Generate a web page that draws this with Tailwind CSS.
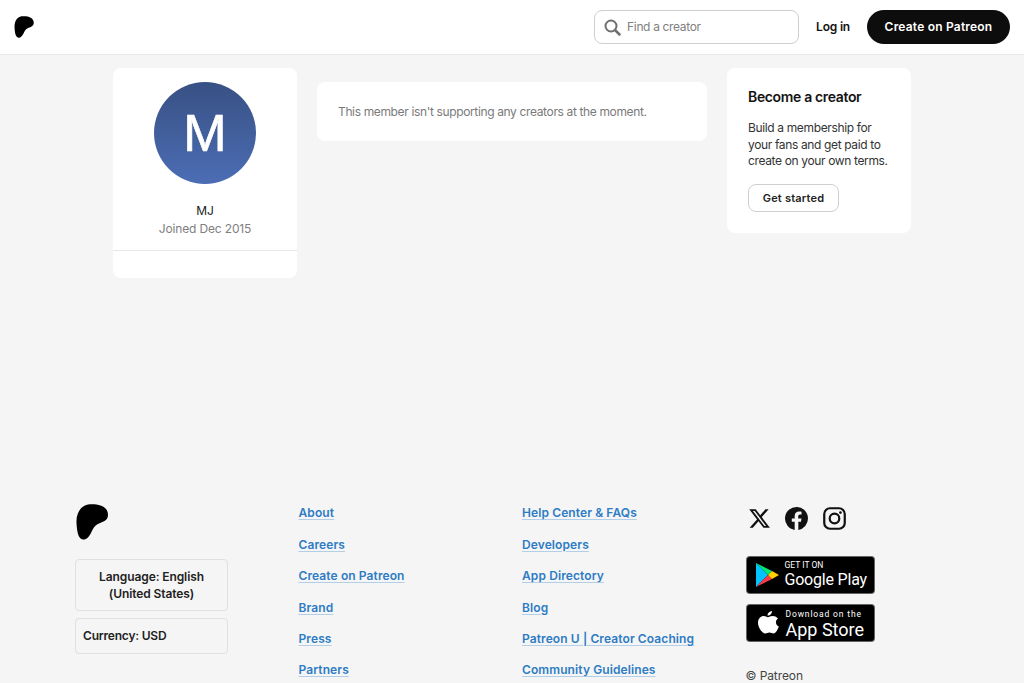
<!DOCTYPE html>
<html lang="en">
<head>
<meta charset="UTF-8">
<meta name="viewport" content="width=device-width, initial-scale=1.0">
<script src="https://cdn.jsdelivr.net/npm/@tailwindcss/browser@4"></script>
<title>MJ | Patreon</title>
</head>
<body class="bg-[#f5f5f5] font-['Inter','Liberation_Sans',sans-serif] h-[683px] overflow-hidden text-[#131313]">
    <!-- header -->
    <header class="h-[55px] bg-white border-b border-[#e8e8e8] flex items-center pl-[14px] pr-[14px]">
        <svg class="w-5 h-[22px]" viewBox="0 0 32 36"><path fill="#000" d="M.5 19C0 10 4 2 12 .5C20-.5 32 1 32 11C32 17 26 18 22 20C18 22 17 25 15 29C13 33 10 36 7 35.500C2 35 1 27 .5 19Z"/></svg>
        <div class="ml-auto w-[205px] h-[34px] border border-[#cfcfcf] rounded-lg flex items-center pl-[9px] mr-[17px]">
            <svg class="w-[17px] h-[17px]" viewBox="0 0 17 17" fill="none" stroke="#6f6f6f"><circle cx="7" cy="7" r="5.500" stroke-width="2"/><path d="M11 11l4.500 4.500" stroke-width="2.500" stroke-linecap="round"/></svg>
            <span class="ml-[6px] text-xs tracking-[-0.35px] text-[#808080]">Find a creator</span>
        </div>
        <a class="text-xs font-semibold tracking-[-0.2px] mr-[17px]">Log in</a>
        <a class="h-[34px] w-[143px] rounded-full bg-[#0d0d0d] text-white text-xs font-semibold tracking-[0.2px] flex items-center justify-center">Create on Patreon</a>
    </header>

    <!-- main -->
    <main class="h-[449px] pt-[13px] ml-[113px] w-[798px] grid grid-cols-[184px_390px_184px] gap-x-5 items-start">
        <section class="bg-white rounded-lg h-[210px] flex flex-col items-center pt-[14px]">
            <div class="w-[102px] h-[102px] rounded-full bg-gradient-to-b from-[#385184] to-[#4c6db5] flex items-center justify-center text-white text-[52px] [-webkit-text-stroke:0.7px_white] font-['Liberation_Sans',sans-serif]">M</div>
            <div class="mt-[18px] text-xs leading-[18px] text-[#222]">MJ</div>
            <div class="text-xs leading-[18px] text-[#808080] tracking-[-0.15px]">Joined Dec 2015</div>
            <div class="w-full border-t border-[#e8e8e8] mt-[12px]"></div>
        </section>
        <section class="bg-white rounded-lg mt-[14px] h-[59px] pl-[21px] flex items-center text-xs text-[#7a7a7a] tracking-[-0.36px]">
            This member isn't supporting any creators at the moment.
        </section>
        <section class="bg-white rounded-lg h-[165px] pl-[21px] pt-[19px]">
            <h2 class="text-sm leading-[20px] font-semibold tracking-[-0.35px]">Become a creator</h2>
            <p class="mt-[13px] text-xs leading-[16.700px] text-[#333] tracking-[-0.36px]">Build a membership for<br>your fans and get paid to<br>create on your own terms.</p>
            <a class="mt-[14px] w-[91px] h-[28px] bg-white border border-[#cfcfcf] rounded-lg flex items-center justify-center text-[11px] font-semibold tracking-[0.2px] text-[#222]">Get started</a>
        </section>
    </main>

    <!-- footer -->
    <footer class="ml-[75px] grid grid-cols-[223.500px_223.500px_223.500px_223.500px]">
        <div>
            <svg class="w-[32px] h-[36px] ml-[1px]" viewBox="0 0 32 36"><path fill="#000" d="M.5 19C0 10 4 2 12 .5C20-.5 32 1 32 11C32 17 26 18 22 20C18 22 17 25 15 29C13 33 10 36 7 35.500C2 35 1 27 .5 19Z"/></svg>
            <div class="mt-[19px] w-[153px] h-[52px] border border-[#e0e0e0] rounded flex items-center justify-center text-center text-xs leading-[17px] font-semibold tracking-[-0.1px] text-[#222]">Language: English<br>(United States)</div>
            <div class="mt-[7px] w-[153px] h-[36px] border border-[#e0e0e0] rounded flex items-center pl-[7px] text-xs font-semibold tracking-[-0.2px] text-[#222]">Currency: USD</div>
        </div>
        <ul class="pt-[0.300px] flex flex-col gap-y-[14px] text-xs leading-[17.400px] font-semibold tracking-[0.1px] text-[#2d7cc4]">
            <li><a class="underline decoration-[#b3cfe8] underline-offset-2">About</a></li>
            <li><a class="underline decoration-[#b3cfe8] underline-offset-2">Careers</a></li>
            <li><a class="underline decoration-[#b3cfe8] underline-offset-2">Create on Patreon</a></li>
            <li><a class="underline decoration-[#b3cfe8] underline-offset-2">Brand</a></li>
            <li><a class="underline decoration-[#b3cfe8] underline-offset-2">Press</a></li>
            <li><a class="underline decoration-[#b3cfe8] underline-offset-2">Partners</a></li>
        </ul>
        <ul class="pt-[0.300px] flex flex-col gap-y-[14px] text-xs leading-[17.400px] font-semibold tracking-[0.1px] text-[#2d7cc4]">
            <li><a class="underline decoration-[#b3cfe8] underline-offset-2">Help Center &amp; FAQs</a></li>
            <li><a class="underline decoration-[#b3cfe8] underline-offset-2">Developers</a></li>
            <li><a class="underline decoration-[#b3cfe8] underline-offset-2">App Directory</a></li>
            <li><a class="underline decoration-[#b3cfe8] underline-offset-2">Blog</a></li>
            <li><a class="underline decoration-[#b3cfe8] underline-offset-2">Patreon U | Creator Coaching</a></li>
            <li><a class="underline decoration-[#b3cfe8] underline-offset-2">Community Guidelines</a></li>
        </ul>
        <div>
            <div class="flex items-center gap-x-[14.500px] ml-[2px] h-[28px]">
                <svg class="w-[23px] h-[23px]" viewBox="0 0 24 24"><path fill="#111" d="M18.244 2.250h3.308l-7.227 8.260 8.502 11.240H16.170l-5.214-6.817L4.990 21.750H1.680l7.730-8.835L1.254 2.250H8.080l4.713 6.231zm-1.161 17.520h1.833L7.084 4.126H5.117z"/></svg>
                <svg class="w-[23px] h-[23px]" viewBox="0 0 24 24"><path fill="#111" d="M24 12a12 12 0 1 0-13.900 11.900v-8.400H7.100V12h3V9.400c0-3 1.800-4.700 4.500-4.700 1.300 0 2.700.2 2.700.2v3h-1.500c-1.500 0-2 .9-2 1.900V12h3.400l-.5 3.500h-2.800v8.400A12 12 0 0 0 24 12z"/></svg>
                <svg class="w-[23px] h-[23px]" viewBox="0 0 24 24" fill="none" stroke="#111"><rect x="1.300" y="1.300" width="21.400" height="21.400" rx="6" stroke-width="2.300"/><circle cx="12" cy="12" r="5" stroke-width="2.300"/><circle cx="18.200" cy="5.800" r="1.400" fill="#111" stroke="none"/></svg>
            </div>
            <div class="mt-[24px] w-[129px] h-[38px] bg-black border border-[#a6a6a6]/60 rounded flex items-center pl-[8px] text-white">
                <svg class="w-[24px] h-[26px] shrink-0" viewBox="0 0 24 26">
                    <path fill="#00c3ff" d="M1 1v24l12-12z"/>
                    <path fill="#00e676" d="M1 1l12 12 4-4z"/>
                    <path fill="#ff3a44" d="M1 25l12-12 4 4z"/>
                    <path fill="#ffd000" d="M17 9l7 4-7 4-4-4z"/>
                </svg>
                <div class="ml-[6px] font-['Roboto',sans-serif] pb-[1px]">
                    <div class="text-[8.500px] leading-[10px]">GET IT ON</div>
                    <div class="text-[16px] leading-[19px] tracking-[-0.2px] whitespace-nowrap">Google Play</div>
                </div>
            </div>
            <div class="mt-[10px] w-[129px] h-[38px] bg-black border border-[#a6a6a6]/60 rounded flex items-center pl-[10px] text-white">
                <svg class="w-[22px] h-[26px] shrink-0" viewBox="0 0 22 26"><path fill="#fff" d="M15 1c.2 2-1.800 4.800-4.500 4.600C10.300 3.500 12.500 1.200 15 1zM21 8.500c-3 2-2.700 6.500.8 8-.8 2.500-3 7-5.300 7-1.500 0-2.300-1-4-1-1.800 0-2.700 1-4.100 1C5.500 23.500 1 18 1 12.800c0-4.600 3-6.800 5.700-6.800 1.800 0 3.200 1.200 4.300 1.200 1 0 2.700-1.400 4.800-1.200 1.500 0 3.900.8 5.200 2.500z"/></svg>
                <div class="ml-[7px] font-['Roboto',sans-serif] pt-[2px]">
                    <div class="text-[8.500px] leading-[11px] tracking-[0.85px] whitespace-nowrap">Download on the</div>
                    <div class="text-[18px] leading-[20px] tracking-[0px] whitespace-nowrap">App Store</div>
                </div>
            </div>
            <div class="mt-[26px] text-xs leading-[16px] tracking-[-0.1px] text-[#444]">© Patreon</div>
        </div>
    </footer>
</body>
</html>
